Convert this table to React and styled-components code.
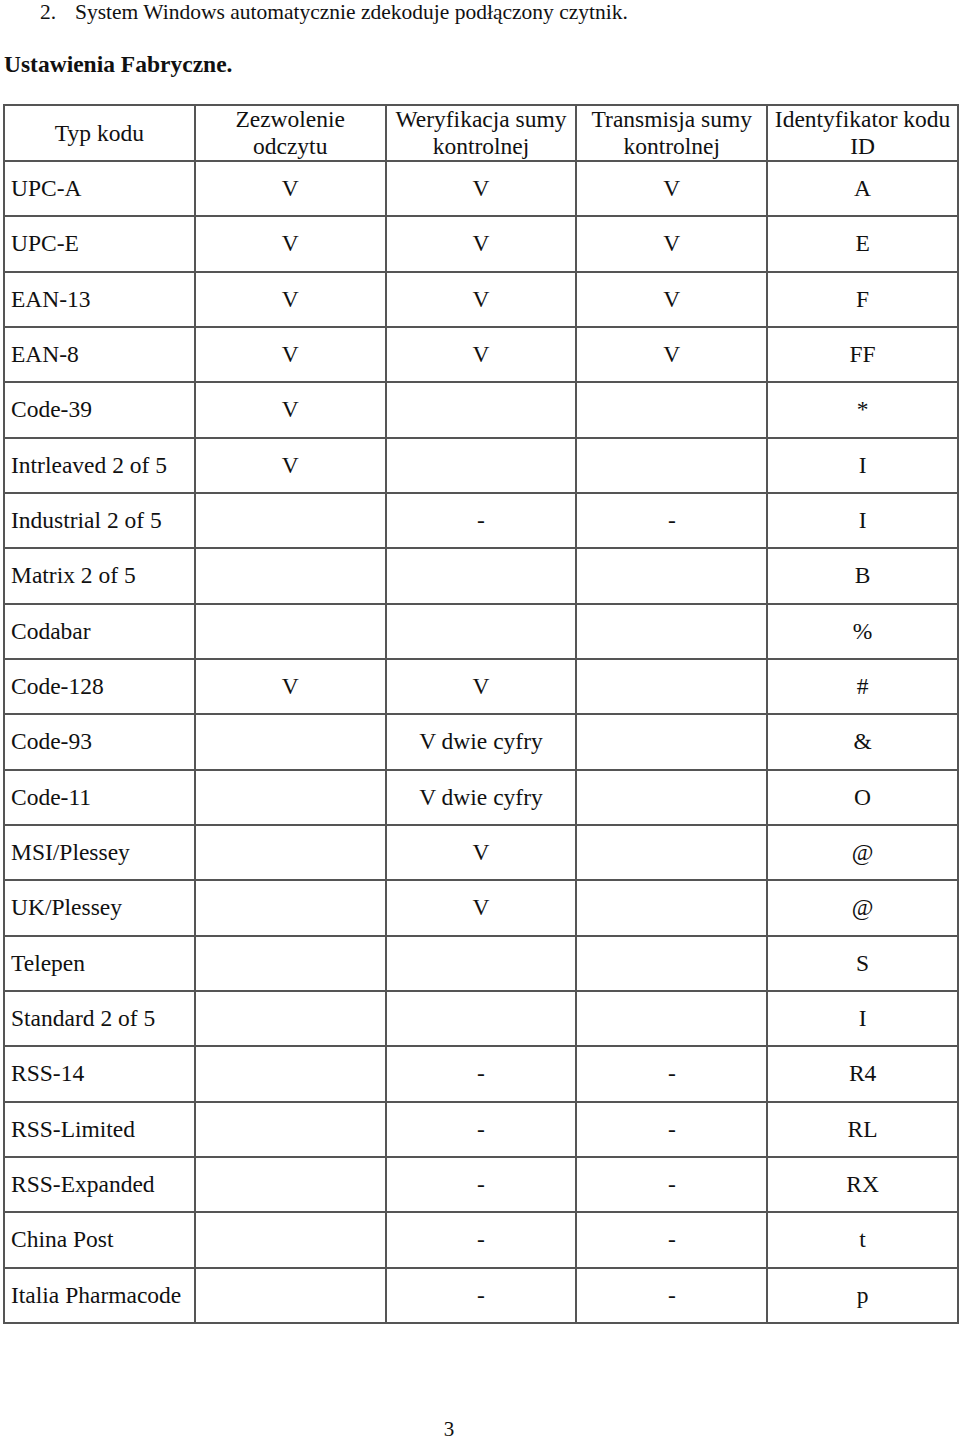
import React from 'react';
import styled, { createGlobalStyle } from 'styled-components';

const GlobalStyle = createGlobalStyle`
  html, body {
    margin: 0;
    padding: 0;
    background: #ffffff;
  }
  body {
    font-family: "Liberation Serif", "Times New Roman", serif;
    color: #111;
  }
`;

const Page = styled.div`
  width: 960px;
  min-height: 1440px;
  display: flex;
  flex-direction: column;
`;

const ListItem = styled.div`
  display: flex;
  font-size: 21.5px;
  line-height: 24px;
  height: 24px;
  padding-left: 40px;
`;

const ListNumber = styled.span`
  width: 35px;
`;

const SectionTitle = styled.h2`
  margin: 0;
  padding: 27px 0 0 4px;
  font-size: 23.5px;
  line-height: 26px;
  font-weight: 700;
`;

const Table = styled.table`
  margin: 27px 0 0 3px;
  width: 956px;
  table-layout: fixed;
  border-collapse: collapse;
  font-size: 23.5px;
  line-height: 27px;
`;

const HeadCell = styled.th`
  font-weight: 400;
  text-align: center;
  vertical-align: middle;
  border: 2px solid #555;
  padding: 0 2px;
  height: 52px;
  white-space: nowrap;
`;

const Row = styled.tr`
  height: 55.33px;
`;

const Cell = styled.td`
  border: 2px solid #555;
  padding: 0 ${(p) => (p.$first ? '6px' : '2px')};
  text-align: ${(p) => (p.$first ? 'left' : 'center')};
  vertical-align: middle;
  white-space: nowrap;
`;

const PageNumber = styled.div`
  margin-top: auto;
  padding-right: 62px;
  text-align: center;
  font-size: 21px;
  line-height: 22px;
`;

const headers = [
  'Typ kodu',
  ['Zezwolenie', 'odczytu'],
  ['Weryfikacja sumy', 'kontrolnej'],
  ['Transmisja sumy', 'kontrolnej'],
  ['Identyfikator kodu', 'ID'],
];

const rows = [
  ['UPC-A', 'V', 'V', 'V', 'A'],
  ['UPC-E', 'V', 'V', 'V', 'E'],
  ['EAN-13', 'V', 'V', 'V', 'F'],
  ['EAN-8', 'V', 'V', 'V', 'FF'],
  ['Code-39', 'V', '', '', '*'],
  ['Intrleaved 2 of 5', 'V', '', '', 'I'],
  ['Industrial 2 of 5', '', '-', '-', 'I'],
  ['Matrix 2 of 5', '', '', '', 'B'],
  ['Codabar', '', '', '', '%'],
  ['Code-128', 'V', 'V', '', '#'],
  ['Code-93', '', 'V dwie cyfry', '', '&'],
  ['Code-11', '', 'V dwie cyfry', '', 'O'],
  ['MSI/Plessey', '', 'V', '', '@'],
  ['UK/Plessey', '', 'V', '', '@'],
  ['Telepen', '', '', '', 'S'],
  ['Standard 2 of 5', '', '', '', 'I'],
  ['RSS-14', '', '-', '-', 'R4'],
  ['RSS-Limited', '', '-', '-', 'RL'],
  ['RSS-Expanded', '', '-', '-', 'RX'],
  ['China Post', '', '-', '-', 't'],
  ['Italia Pharmacode', '', '-', '-', 'p'],
];

const App = () => (
  <>
    <GlobalStyle />
    <Page>
      <ListItem>
        <ListNumber>2.</ListNumber>
        <span>System Windows automatycznie zdekoduje podłączony czytnik.</span>
      </ListItem>
      <SectionTitle>Ustawienia Fabryczne.</SectionTitle>
      <Table>
        <thead>
          <tr>
            {headers.map((h, i) => (
              <HeadCell key={i}>
                {Array.isArray(h) ? (
                  <>
                    {h[0]}
                    <br />
                    {h[1]}
                  </>
                ) : (
                  h
                )}
              </HeadCell>
            ))}
          </tr>
        </thead>
        <tbody>
          {rows.map((r) => (
            <Row key={r[0]}>
              {r.map((c, i) => (
                <Cell key={i} $first={i === 0}>
                  {c}
                </Cell>
              ))}
            </Row>
          ))}
        </tbody>
      </Table>
      <PageNumber>3</PageNumber>
    </Page>
  </>
);

export default App;
